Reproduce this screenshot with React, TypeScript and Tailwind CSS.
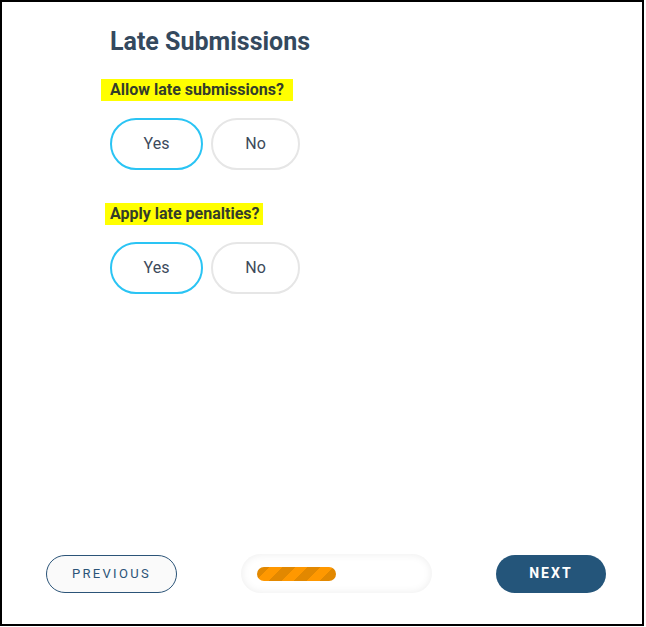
import React, { useState } from "react";

function Choice(props: { value: boolean; onChange: (v: boolean) => void }) {
  return (
    <div className="mt-[17px] flex gap-2">
      <button
        type="button"
        onClick={() => props.onChange(true)}
        className={
          props.value
            ? "h-[52px] w-[93px] rounded-full border-2 border-[#2ac4f4] bg-white text-[16px] text-[#3c4a5a]"
            : "h-[52px] w-[93px] rounded-full border-2 border-[#e6e6e6] bg-white text-[16px] text-[#3c4a5a]"
        }
      >
        Yes
      </button>
      <button
        type="button"
        onClick={() => props.onChange(false)}
        className={
          !props.value
            ? "h-[52px] w-[89px] rounded-full border-2 border-[#2ac4f4] bg-white text-[16px] text-[#3c4a5a]"
            : "h-[52px] w-[89px] rounded-full border-2 border-[#e6e6e6] bg-white text-[16px] text-[#3c4a5a]"
        }
      >
        No
      </button>
    </div>
  );
}

export default function App() {
  const [allowLate, setAllowLate] = useState(true);
  const [penalties, setPenalties] = useState(true);

  return (
    <div
      className="flex h-[626px] w-[644px] flex-col border-2 border-black bg-white"
      style={{ fontFamily: "Roboto, 'Noto Sans', sans-serif" }}
    >
      <div className="flex flex-1 flex-col pl-[108px] pt-[25px]">
        <h1 className="text-[25px] font-bold leading-[30px] text-[#34495e]">
          Late Submissions
        </h1>

        <div className="mt-[22px] -ml-[9px] w-fit bg-[#ffff00] px-[9px] text-[16px] font-bold leading-[22px] text-[#333d2b]">
          Allow late submissions?
        </div>
        <Choice value={allowLate} onChange={setAllowLate} />

        <div className="mt-[33px] -ml-[5px] w-fit bg-[#ffff00] pl-[5px] pr-[4px] text-[16px] font-bold leading-[22px] text-[#333d2b]">
          Apply late penalties?
        </div>
        <Choice value={penalties} onChange={setPenalties} />
      </div>

      <div className="flex items-center justify-between pb-[31px] pl-[44px] pr-[36px]">
        <button
          type="button"
          className="h-[38px] w-[131px] rounded-full border border-[#2b5478] bg-[#fafafa] text-[13px] tracking-[0.18em] text-[#2b5478]"
        >
          PREVIOUS
        </button>

        <div className="flex h-[39px] w-[191px] items-center rounded-full bg-white px-4 shadow-[inset_0_0_8px_rgba(0,0,0,0.08)]">
          <div
            className="h-[14px] w-[79px] rounded-full"
            style={{
              backgroundColor: "#ff9800",
              backgroundImage:
                "repeating-linear-gradient(135deg, #e28800 0 9px, #ff9800 9px 18px)",
            }}
          />
        </div>

        <button
          type="button"
          className="h-[38px] w-[110px] rounded-full bg-[#24557a] text-[14px] font-bold tracking-[0.15em] text-white"
        >
          NEXT
        </button>
      </div>
    </div>
  );
}
